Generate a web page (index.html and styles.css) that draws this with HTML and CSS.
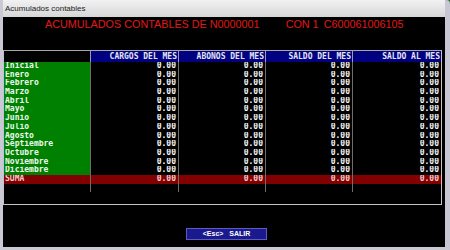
FILE: index.html
```html
<!DOCTYPE html>
<html>
<head>
  <title>Acumulados contables</title>
  <link rel="stylesheet" href="styles.css">
</head>
<body>
  <div class="window">
    <div class="titlebar">Acumulados contables</div>
    <div class="screen">
      <div class="heading">
        <span>ACUMULADOS CONTABLES DE N0000001</span>
        <span class="con">CON 1</span>
        <span class="cta">C600061006105</span>
      </div>

      <div class="frame">
        <div class="row head"><span></span><span>CARGOS DEL MES</span><span>ABONOS DEL MES</span><span>SALDO DEL MES</span><span>SALDO AL MES</span></div>
        <div class="row month"><span>Inicial</span><span>0.00</span><span>0.00</span><span>0.00</span><span>0.00</span></div>
        <div class="row month"><span>Enero</span><span>0.00</span><span>0.00</span><span>0.00</span><span>0.00</span></div>
        <div class="row month"><span>Febrero</span><span>0.00</span><span>0.00</span><span>0.00</span><span>0.00</span></div>
        <div class="row month"><span>Marzo</span><span>0.00</span><span>0.00</span><span>0.00</span><span>0.00</span></div>
        <div class="row month"><span>Abril</span><span>0.00</span><span>0.00</span><span>0.00</span><span>0.00</span></div>
        <div class="row month"><span>Mayo</span><span>0.00</span><span>0.00</span><span>0.00</span><span>0.00</span></div>
        <div class="row month"><span>Junio</span><span>0.00</span><span>0.00</span><span>0.00</span><span>0.00</span></div>
        <div class="row month"><span>Julio</span><span>0.00</span><span>0.00</span><span>0.00</span><span>0.00</span></div>
        <div class="row month"><span>Agosto</span><span>0.00</span><span>0.00</span><span>0.00</span><span>0.00</span></div>
        <div class="row month"><span>Septiembre</span><span>0.00</span><span>0.00</span><span>0.00</span><span>0.00</span></div>
        <div class="row month"><span>Octubre</span><span>0.00</span><span>0.00</span><span>0.00</span><span>0.00</span></div>
        <div class="row month"><span>Noviembre</span><span>0.00</span><span>0.00</span><span>0.00</span><span>0.00</span></div>
        <div class="row month"><span>Diciembre</span><span>0.00</span><span>0.00</span><span>0.00</span><span>0.00</span></div>
        <div class="row total"><span>SUMA</span><span>0.00</span><span>0.00</span><span>0.00</span><span>0.00</span></div>
        <div class="row spacer"><span></span><span></span><span></span><span></span><span></span></div>
      </div>

      <div class="actions">
        <button type="button" class="btn">&lt;Esc&gt;&nbsp;&nbsp;&nbsp;SALIR</button>
      </div>
    </div>
  </div>
</body>
</html>
```

FILE: styles.css
```css
html {
  background-color: #2f7f2f;
}

body {
  margin: 0;
  font-family: "Liberation Sans", Arial, sans-serif;
}

.window {
  width: 450px;
  height: 250px;
  box-sizing: border-box;
  border-left: 3px solid #c9c9d6;
  border-right: 5px solid #c6c6d4;
  border-bottom: 3px solid #c9c9d6;
  border-top-right-radius: 4px;
  background-color: #000;
  overflow: hidden;
}

.titlebar {
  height: 17px;
  margin-left: -3px;
  margin-right: -5px;
  padding-left: 5px;
  box-sizing: border-box;
  background: linear-gradient(#f2f2f2, #d6d6d8);
  color: #1a1a1a;
  font-size: 8px;
  line-height: 18px;
}

.screen {
  height: 230px;
  background-color: #000;
}

.heading {
  height: 33px;
  box-sizing: border-box;
  padding-top: 1px;
  padding-left: 42px;
  display: flex;
  color: #e01818;
  font-size: 10.8px;
  line-height: 13px;
  white-space: nowrap;
}

.heading .con {
  margin-left: 26px;
}

.heading .cta {
  margin-left: 5px;
}

.frame {
  width: 439px;
  height: 155px;
  box-sizing: border-box;
  border: 1px solid #c4c4c4;
  border-top-color: #a8a8a8;
}

.row {
  display: grid;
  grid-template-columns: 86px 88px 87px 87px 89px;
  height: 8.7px;
  font-family: "DejaVu Sans Mono", monospace;
  font-weight: bold;
  font-size: 8px;
  line-height: 8.7px;
  color: #f4f4f4;
  white-space: nowrap;
}

.row span {
  overflow: hidden;
  padding-left: 1px;
}

.row span + span {
  box-sizing: border-box;
  border-left: 1px solid #6e6e6e;
  text-align: right;
  padding-right: 2px;
}

.head {
  height: 11px;
  line-height: 11px;
  color: #e4e4f4;
}

.head span + span {
  background-color: #000080;
  border-left-color: #9a9ab8;
  padding-right: 1px;
}

.month span:first-child {
  background-color: #008000;
  color: #eef8ee;
}

.total {
  background-color: #820000;
  color: #f4caca;
}

.spacer {
  height: 8px;
}

.actions {
  padding-top: 17px;
  padding-left: 183px;
}

.btn {
  width: 81px;
  height: 12px;
  padding: 0;
  border: 1px solid #5c5cc0;
  background-color: #1a1a8e;
  color: #fff;
  font-family: "Liberation Sans", Arial, sans-serif;
  font-weight: bold;
  font-size: 7px;
  line-height: 10px;
  white-space: nowrap;
}
```
